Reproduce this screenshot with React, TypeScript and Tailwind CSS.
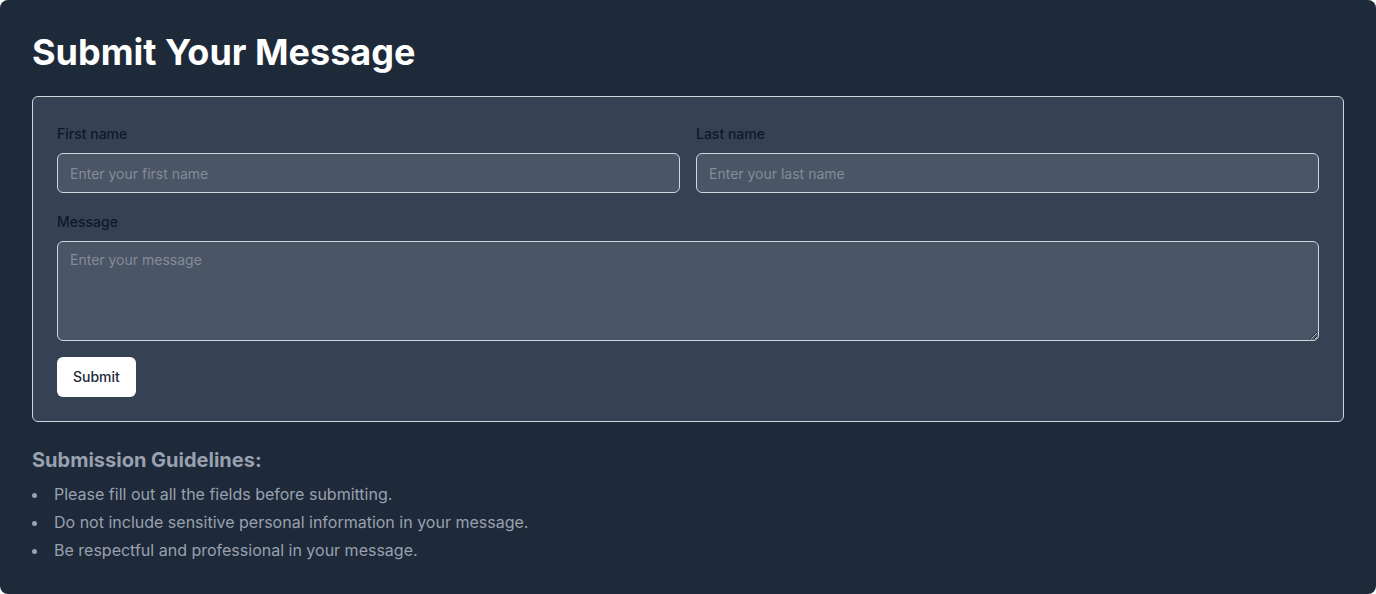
import React from "react";

export default function App() {
  return (
    <div className="bg-white min-h-screen" style={{ fontFamily: "Inter, 'Noto Sans', sans-serif" }}>
      <div className="bg-gray-800 rounded-lg p-8 min-h-[594px]">
        <h1 className="text-4xl font-bold text-white mb-6">Submit Your Message</h1>
        <form
          className="bg-gray-700 border border-gray-300 rounded-md p-6 flex flex-col gap-4"
          onSubmit={(e) => e.preventDefault()}
        >
          <div className="grid grid-cols-2 gap-4">
            <div>
              <label className="block text-sm leading-6 font-medium text-gray-900 mb-2 pt-px">First name</label>
              <input
                type="text"
                placeholder="Enter your first name"
                className="block w-full h-10 rounded-md border border-gray-300 bg-gray-600 px-3 text-sm text-white placeholder:text-[#858c98] outline-none -mt-px"
              />
            </div>
            <div>
              <label className="block text-sm leading-6 font-medium text-gray-900 mb-2 pt-px">Last name</label>
              <input
                type="text"
                placeholder="Enter your last name"
                className="block w-full h-10 rounded-md border border-gray-300 bg-gray-600 px-3 text-sm text-white placeholder:text-[#858c98] outline-none -mt-px"
              />
            </div>
          </div>
          <div>
            <label className="block text-sm leading-6 font-medium text-gray-900 mb-2 pt-px">Message</label>
            <textarea
              placeholder="Enter your message"
              className="block w-full h-[100px] rounded-md border border-gray-300 bg-gray-600 px-3 py-2 text-sm leading-5 text-white placeholder:text-[#858c98] outline-none -mt-px"
            />
          </div>
          <div>
            <button
              type="submit"
              className="h-10 px-4 rounded-md bg-white text-sm font-medium text-gray-800"
            >
              Submit
            </button>
          </div>
        </form>
        <div className="mt-6">
          <h2 className="text-xl font-bold text-gray-400 mb-2">Submission Guidelines:</h2>
          <ul className="list-disc list-inside flex flex-col gap-1 text-base text-gray-400">
            <li>Please fill out all the fields before submitting.</li>
            <li>Do not include sensitive personal information in your message.</li>
            <li>Be respectful and professional in your message.</li>
          </ul>
        </div>
      </div>
    </div>
  );
}
